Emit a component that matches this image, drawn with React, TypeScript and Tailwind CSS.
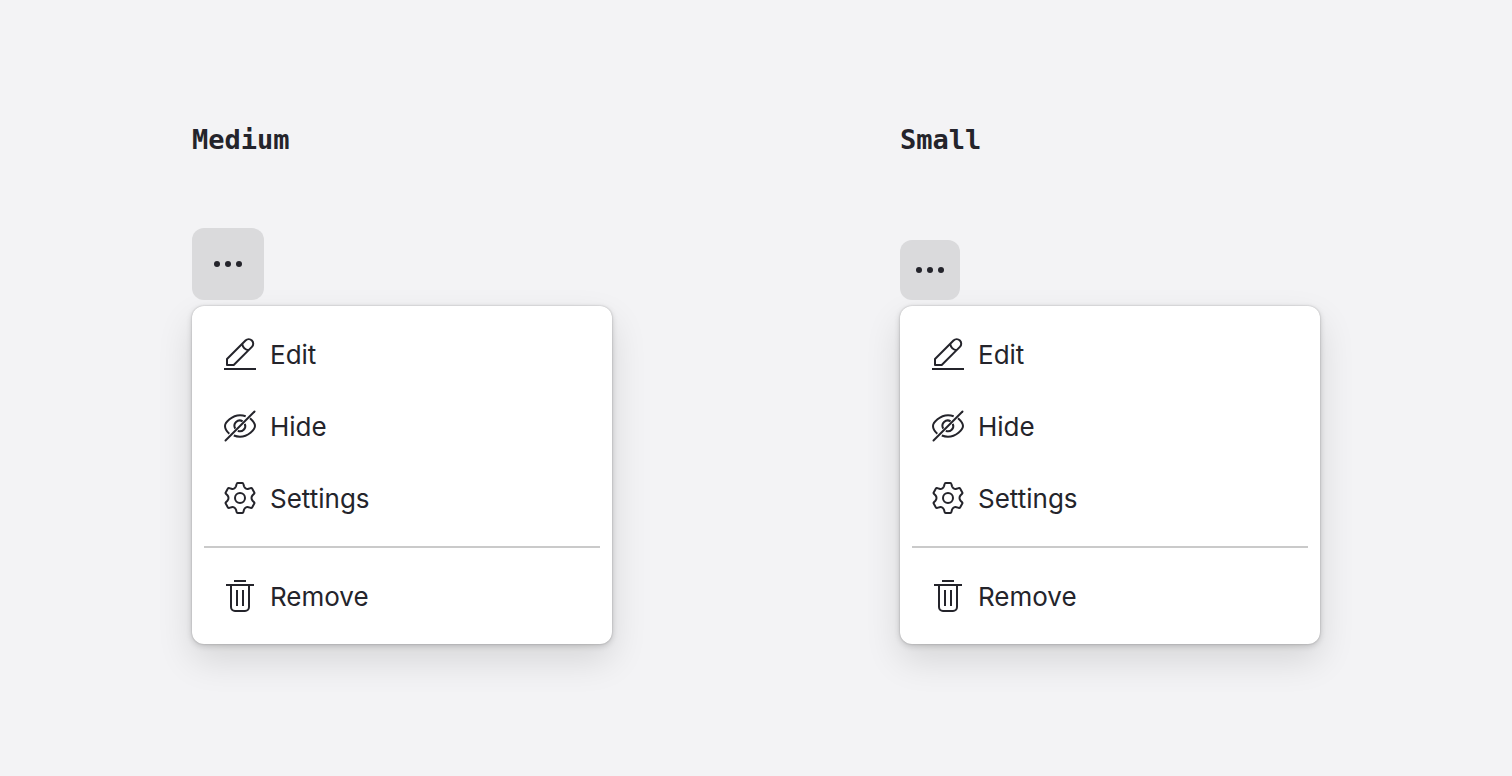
import type { ReactNode } from "react";

function Icon({ children }: { children: ReactNode }) {
  return (
    <svg
      className="w-8 h-8 shrink-0"
      viewBox="0 0 32 32"
      fill="none"
      stroke="currentColor"
      strokeWidth="2"
      aria-hidden="true"
    >
      {children}
    </svg>
  );
}

const EditIcon = () => (
  <Icon>
    <path d="M0 31h32" />
    <path
      d="M3 21 21.5 2.5a4.5 4.5 0 0 1 6.4 6.4L9.7 27H3zM18.2 5.8c.6 3.4 3 5.800 6.400 6.400"
      strokeLinejoin="round"
    />
  </Icon>
);

const HideIcon = () => (
  <Icon>
    <path d="M1.500 30.500 30.500 1.500" strokeLinecap="round" />
    <path d="M5.300 23.700C2.400 21.200 1 18 1 16 1 12.500 8 5.300 16 5.300c2 0 3.900.3 5.700.9" />
    <path d="M26 8.200C29.200 11 31 14.200 31 16c0 3.500-7 10.700-15 10.700-2.200 0-4.200-.4-6.200-1.200" />
    <path d="M11.300 18.600A5.300 5.300 0 0 1 18.600 11.300M20.800 13.800A5.300 5.300 0 0 1 13.800 20.800" />
  </Icon>
);

const SettingsIcon = () => (
  <Icon>
    <path
      d="M13.700 1h4.600q.9 0 1.100.9l.6 2.300q.5 1.700 2 2.400 1 .6 2.600.1l2.200-.6q.9-.2 1.300.5l2.200 3.900q.4.700-.2 1.300l-1.500 1.500Q27.500 14.500 27.500 16t1.100 2.700l1.500 1.500q.6.600.2 1.300l-2.200 3.900q-.4.700-1.300.5l-2.200-.6q-1.600-.5-2.600.1-1.500.7-2 2.400l-.6 2.300q-.2.9-1.100.9h-4.600q-.9 0-1.100-.9l-.6-2.300q-.5-1.700-2-2.400-1-.6-2.600-.1l-2.200.6q-.9.200-1.300-.5L1.700 21.500q-.4-.7.200-1.300l1.500-1.500Q4.500 17.500 4.500 16t-1.100-2.700L1.900 11.800q-.6-.6-.2-1.300l2.200-3.900q.4-.7 1.300-.5l2.200.6q1.600.5 2.600-.1 1.500-.7 2-2.400l.6-2.300q.2-.9 1.100-.9z"
      strokeLinejoin="round"
    />
    <circle cx="16" cy="16" r="5" />
  </Icon>
);

const TrashIcon = () => (
  <Icon>
    <path d="M10 1h12M2 5h28M7 5v22a4 4 0 0 0 4 4h10a4 4 0 0 0 4-4V5M13 10v16M19 10v16" />
  </Icon>
);

const items = [
  { label: "Edit", icon: <EditIcon /> },
  { label: "Hide", icon: <HideIcon /> },
  { label: "Settings", icon: <SettingsIcon /> },
];

function MenuItem({ label, icon }: { label: string; icon: ReactNode }) {
  return (
    <button
      type="button"
      role="menuitem"
      className="flex w-full h-18 items-center gap-3.5 px-5 text-left"
    >
      {icon}
      <span className="pt-0.5 text-[26px] leading-9">{label}</span>
    </button>
  );
}

function Dropdown({ title, small = false }: { title: string; small?: boolean }) {
  return (
    <section className="w-[420px]">
      <h2 className="font-['DejaVu_Sans_Mono',monospace] text-[27px] leading-10 font-bold">{title}</h2>

      {/* Trigger */}
      <div className="mt-17 flex h-18 items-end">
        <button
          type="button"
          aria-label="More actions"
          aria-haspopup="menu"
          aria-expanded="true"
          className={`flex items-center justify-center rounded-xl bg-[#dadadc] ${small ? "size-15" : "size-18"}`}
        >
          <svg className="w-8 h-8" viewBox="0 0 32 32" fill="currentColor" aria-hidden="true">
            <circle cx="5" cy="16" r="3" />
            <circle cx="16" cy="16" r="3" />
            <circle cx="27" cy="16" r="3" />
          </svg>
        </button>
      </div>

      {/* Menu */}
      <div
        role="menu"
        aria-label={title}
        className="mt-1.5 rounded-xl bg-white p-3 shadow-[0_0_2px_rgba(0,0,0,0.24),0_2px_6px_rgba(0,0,0,0.16),0_16px_36px_rgba(0,0,0,0.12)]"
      >
        {items.map((item) => (
          <MenuItem key={item.label} {...item} />
        ))}
        <hr className="my-3 border-t-2 border-[#cacaca]" />
        <MenuItem label="Remove" icon={<TrashIcon />} />
      </div>
    </section>
  );
}

export default function App() {
  return (
    <main className="min-h-screen bg-[#f3f3f5] px-48 py-30 font-['Inter',sans-serif] text-[#24242b]">
      <div className="flex justify-between gap-12">
        <Dropdown title="Medium" />
        <Dropdown title="Small" small />
      </div>
    </main>
  );
}
